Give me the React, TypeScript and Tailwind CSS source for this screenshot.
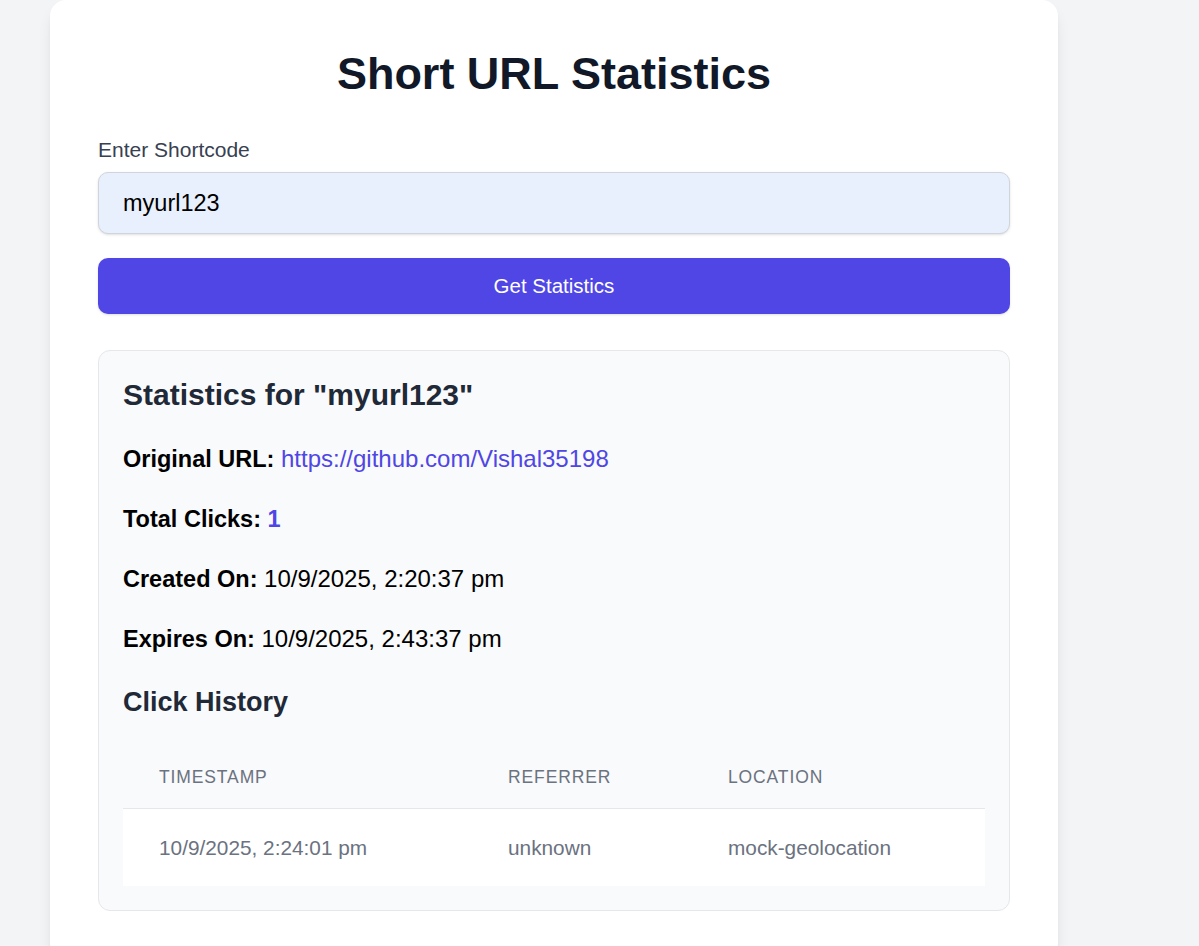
import React from "react";

const clicks = [
  { timestamp: "10/9/2025, 2:24:01 pm", referrer: "unknown", location: "mock-geolocation" },
];

const App: React.FC = () => {
  return (
    <div className="min-h-screen bg-[#f3f4f6] font-['Liberation_Sans',Arial,sans-serif]">
      <div className="ml-[50px] w-[1008px] rounded-2xl bg-white px-[48px] pt-[48px] pb-[48px] shadow-lg">
        <h1 className="text-center text-[45px] leading-[51px] font-bold text-[#111827]">Short URL Statistics</h1>

        {/* Shortcode form */}
        <label className="mt-[37px] block text-[21px] leading-[28px] text-[#374151]">Enter Shortcode</label>
        <input
          defaultValue="myurl123"
          className="mt-[8px] block h-[62px] w-full rounded-[10px] border border-[#d1d5db] bg-[#e8f0fe] px-[24px] text-[23.5px] text-black shadow-sm outline-none"
        />
        <button className="mt-[24px] flex h-[56px] w-full items-center justify-center rounded-[10px] bg-[#4f46e5] text-[20.5px] text-white shadow-sm">
          Get Statistics
        </button>

        {/* Result */}
        <div className="mt-[36px] rounded-[12px] border border-[#e5e7eb] bg-[#f9fafb] p-[24px]">
          <h2 className="text-[30px] leading-[39px] font-bold text-[#1f2937]">Statistics for "myurl123"</h2>

          <div className="mt-[27px] flex flex-col gap-[24px] text-[23.5px] leading-[36px] text-black">
            <p>
              <strong>Original URL:</strong>{" "}
              <a href="#" className="text-[24px] text-[#4f46e5]">https://github.com/Vishal35198</a>
            </p>
            <p>
              <strong>Total Clicks:</strong> <span className="font-bold text-[#4f46e5]">1</span>
            </p>
            <p>
              <strong>Created On:</strong> <span className="text-[24px]">10/9/2025, 2:20:37 pm</span>
            </p>
            <p>
              <strong>Expires On:</strong> <span className="text-[24px]">10/9/2025, 2:43:37 pm</span>
            </p>
          </div>

          <h3 className="mt-[29px] text-[27px] leading-[32px] font-bold text-[#1f2937]">Click History</h3>

          <table className="mt-[29px] w-full table-fixed border-collapse">
            <colgroup>
              <col className="w-[349px]" />
              <col className="w-[220px]" />
              <col className="w-[293px]" />
            </colgroup>
            <thead>
              <tr className="border-b border-[#e5e7eb]">
                <th className="h-[61px] pl-[36px] text-left text-[17.5px] font-normal uppercase tracking-[0.05em] text-[#6b7280]">Timestamp</th>
                <th className="h-[61px] pl-[36px] text-left text-[17.5px] font-normal uppercase tracking-[0.05em] text-[#6b7280]">Referrer</th>
                <th className="h-[61px] pl-[36px] text-left text-[17.5px] font-normal uppercase tracking-[0.05em] text-[#6b7280]">Location</th>
              </tr>
            </thead>
            <tbody>
              {clicks.map((c, i) => (
                <tr key={i} className="bg-white">
                  <td className="h-[78px] pl-[36px] text-[20.8px] text-[#6b7280]">{c.timestamp}</td>
                  <td className="h-[78px] pl-[36px] text-[20.8px] text-[#6b7280]">{c.referrer}</td>
                  <td className="h-[78px] pl-[36px] text-[20.8px] text-[#6b7280]">{c.location}</td>
                </tr>
              ))}
            </tbody>
          </table>
        </div>
      </div>
    </div>
  );
};

export default App;
